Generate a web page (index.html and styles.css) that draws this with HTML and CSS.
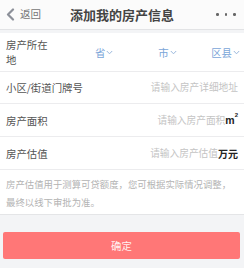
FILE: index.html
```html
<!DOCTYPE html>
<html lang="zh-CN">
<head>
<meta charset="utf-8">
<link rel="stylesheet" href="styles.css">
</head>
<body>
<header class="topbar">
  <div class="back">
    <svg class="back-icon" width="10" height="13" viewBox="0 0 10 13"><path d="M8 1.5 L3 6.5 L8 11.5" fill="none" stroke="#8c9099" stroke-width="2.2" stroke-linecap="round" stroke-linejoin="round"/></svg>
    <span class="back-text">返回</span>
  </div>
  <h1 class="title">添加我的房产信息</h1>
  <div class="more"><span></span><span></span><span></span></div>
</header>

<section class="form">
  <div class="row row-location">
    <div class="label">房产所在地</div>
    <div class="selects">
      <div class="select">省<svg class="caret" width="7" height="5" viewBox="0 0 7 5"><path d="M0.8 1 L3.5 3.8 L6.2 1" fill="none" stroke="#9ab8dc" stroke-width="1"/></svg></div>
      <div class="select">市<svg class="caret" width="7" height="5" viewBox="0 0 7 5"><path d="M0.8 1 L3.5 3.8 L6.2 1" fill="none" stroke="#9ab8dc" stroke-width="1"/></svg></div>
      <div class="select">区县<svg class="caret" width="7" height="5" viewBox="0 0 7 5"><path d="M0.8 1 L3.5 3.8 L6.2 1" fill="none" stroke="#9ab8dc" stroke-width="1"/></svg></div>
    </div>
  </div>
  <div class="row row-addr">
    <div class="label-wide">小区/街道门牌号</div>
    <div class="value"><span class="placeholder">请输入房产详细地址</span></div>
  </div>
  <div class="row">
    <div class="label-wide">房产面积</div>
    <div class="value"><span class="placeholder">请输入房产面积</span><span class="unit unit-area">m<sup class="sq">2</sup></span></div>
  </div>
  <div class="row">
    <div class="label-wide">房产估值</div>
    <div class="value"><span class="placeholder">请输入房产估值</span><span class="unit">万元</span></div>
  </div>
  <p class="note">房产估值用于测算可贷额度，您可根据实际情况调整，最终以线下审批为准。</p>
</section>

<div class="actions">
  <button class="confirm" type="button">确定</button>
</div>
</body>
</html>
```

FILE: styles.css
```css
* { box-sizing: border-box; }

html, body {
  margin: 0;
  padding: 0;
}

body {
  width: 244px;
  height: 268px;
  background: #f3f4f6;
  font-family: "Noto Sans CJK SC", "Noto Sans", sans-serif;
  color: #555;
  overflow: hidden;
}

.topbar {
  height: 30px;
  background: #fbfbfb;
  border-bottom: 1px solid #e2e3e5;
  display: grid;
  grid-template-columns: 60px 1fr 60px;
  align-items: center;
}

.back {
  display: flex;
  align-items: center;
  padding-left: 5px;
  gap: 5px;
}

.back-icon { display: block; }

.back-text {
  font-size: 10.5px;
  color: #777;
  line-height: 1;
}

.title {
  margin: 0;
  text-align: center;
  font-size: 13px;
  font-weight: 700;
  color: #444;
  line-height: 1;
  white-space: nowrap;
}

.more {
  display: flex;
  justify-content: flex-end;
  gap: 6px;
  padding-right: 8px;
}

.more span {
  width: 2.6px;
  height: 2.6px;
  border-radius: 50%;
  background: #666;
}

.form {
  margin-top: 3px;
  background: #fff;
  border-bottom: 1px solid #e4e5e7;
}

.row {
  display: flex;
  align-items: center;
  justify-content: space-between;
  height: 33px;
  padding: 0 6px;
  border-bottom: 1px solid #ececee;
}

.row-location { height: 39px; }
.row-addr { height: 32px; }

.label {
  width: 44px;
  font-size: 10.4px;
  line-height: 15px;
  color: #555;
}

.label-wide {
  font-size: 10.4px;
  line-height: 15px;
  color: #555;
  white-space: nowrap;
}

.selects {
  flex: 1;
  display: grid;
  grid-template-columns: repeat(3, 1fr);
  margin-right: -2px;
}

.select {
  display: flex;
  align-items: center;
  justify-content: flex-end;
  gap: 1px;
  font-size: 10.4px;
  color: #7aa5d8;
  line-height: 15px;
}

.caret { display: block; }

.value {
  display: flex;
  align-items: center;
  line-height: 15px;
}

.placeholder {
  font-size: 9.7px;
  color: #c4c4c4;
}

.unit {
  font-size: 10px;
  font-weight: 700;
  color: #222;
}

.unit-area {
  font-family: "Liberation Sans", sans-serif;
  font-size: 10.5px;
  position: relative;
}

.sq {
  font-size: 6px;
  vertical-align: top;
  line-height: 1;
  position: relative;
  top: -1px;
}

.note {
  margin: 0;
  padding: 5px 6px 3px;
  font-size: 9.4px;
  line-height: 18px;
  color: #b3b3b3;
}

.actions {
  padding: 17px 4px 0 3px;
}

.confirm {
  display: block;
  width: 100%;
  height: 27px;
  border: none;
  border-radius: 2px;
  background: #ff7777;
  color: #fff0f0;
  font-family: inherit;
  font-size: 10.4px;
  padding: 0;
}
```
